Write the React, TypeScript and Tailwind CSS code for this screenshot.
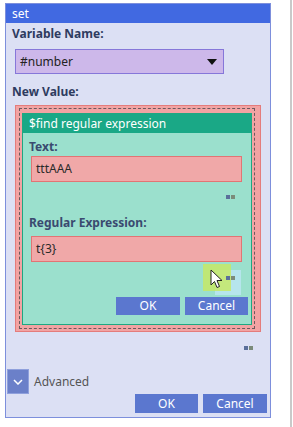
import React from "react";

const font = { fontFamily: '"Noto Sans", "Open Sans", Arial, sans-serif' };

const Quotes: React.FC<{ className?: string }> = ({ className }) => (
  <div className={"flex gap-[1px] " + (className ?? "")}>
    <span className="block w-[4px] h-[4px] bg-[#5a6f9a]" />
    <span className="block w-[4px] h-[4px] bg-[#7b8b7a]" />
  </div>
);

const Cursor: React.FC = () => (
  <svg width="14" height="20" viewBox="0 0 14 20">
    <path
      d="M1 1 L1 16 L4.5 12.5 L7 18.5 L9.5 17.5 L7 11.5 L12 11.5 Z"
      fill="#ffffff"
      stroke="#222"
      strokeWidth="1"
      strokeLinejoin="round"
    />
  </svg>
);

export default function App() {
  return (
    <div style={font} className="w-[292px] h-[427px] bg-white border-r-2 border-[#c9c9c9] pt-[3px] pl-[5px]">
      <div className="w-[266px] h-[415px] border border-[#7d8fdc] bg-[#dce0f4] flex flex-col">
        {/* title */}
        <div className="h-[19px] bg-[#4169e1] text-white text-[12px] leading-[19px] pl-[6px]">set</div>

        <div className="pl-[6px] pt-[3px] text-[12px] leading-[16px] font-bold text-[#2e3b60]">Variable Name:</div>
        <div className="ml-[9px] mt-[7px] w-[209px] h-[25px] border border-[#8677d9] bg-[#cdb8ea] flex items-center justify-between px-[4px]">
          <span className="text-[12px] text-[#222]">#number</span>
          <svg width="10" height="6" viewBox="0 0 10 6" className="mr-[2px]">
            <path d="M0 0 H10 L5 6 Z" fill="#111" />
          </svg>
        </div>

        <div className="pl-[6px] mt-[10px] text-[12px] leading-[16px] font-bold text-[#2e3b60]">New Value:</div>

        {/* red value box */}
        <div className="ml-[9px] mt-[5px] w-[246px] h-[227px] border border-[#e47c7c] bg-[#f2a3a3] pt-[2px] pb-[2px] pl-[3px] pr-[5px]">
          <div className="h-full border border-dashed border-[#6b5a5e] pt-[4px] pl-[2px] pr-[2px] pb-[3px]">
            <div className="h-full border border-[#1ea882] bg-[#9be0cd] flex flex-col">
              <div className="h-[19px] bg-[#1aa886] text-white text-[12px] leading-[19px] pl-[6px]">
                $find regular expression
              </div>
              <div className="relative flex-1 flex flex-col pl-[6px] pr-[9px]">
                <div className="mt-[6px] text-[12px] leading-[16px] font-bold text-[#3a4a70]">Text:</div>
                <div className="mt-[1px] ml-[2px] h-[26px] border border-[#e27474] bg-[#f0a8a8] flex items-center pl-[4px] text-[12px] text-[#2a2a2a]">
                  tttAAA
                </div>
                <div className="flex justify-end mt-[13px] pr-[7px]">
                  <Quotes />
                </div>
                <div className="mt-[16px] text-[12px] leading-[16px] font-bold text-[#3a4a70]">Regular Expression:</div>
                <div className="mt-[5px] ml-[2px] h-[26px] border border-[#e27474] bg-[#f0a8a8] flex items-center pl-[4px] text-[12px] text-[#2a2a2a]">
                  t{"{3}"}
                </div>

                {/* hover overlay */}
                <div className="absolute left-[192px] top-[137px] w-[26px] h-[25px] bg-[#b9e6f0]/90" />
                <div className="absolute left-[180px] top-[131px] w-[28px] h-[27px] bg-[#c8e860]/80" />

                <div className="relative z-10 flex justify-end mt-[14px] pr-[7px]">
                  <Quotes />
                </div>
                <div className="flex justify-end gap-[5px] mt-[17px] -mr-[6px]">
                  <button className="w-[64px] h-[18px] bg-[#5b77cf] text-white text-[12px] leading-[18px]">OK</button>
                  <button className="w-[63px] h-[18px] bg-[#5b77cf] text-white text-[12px] leading-[18px]">Cancel</button>
                </div>

                <div className="absolute z-20 left-[187px] top-[136px]">
                  <Cursor />
                </div>
              </div>
            </div>
          </div>
        </div>

        <div className="flex justify-end mt-[14px] pr-[17px]">
          <Quotes />
        </div>

        <div className="flex items-center mt-[19px] ml-[1px]">
          <div className="w-[22px] h-[25px] bg-[#6b80c9] border border-[#8fa0dc] flex items-center justify-center">
            <svg width="10" height="6" viewBox="0 0 10 6">
              <path d="M1 1 L5 5 L9 1" stroke="#fff" strokeWidth="1.5" fill="none" />
            </svg>
          </div>
          <span className="ml-[5px] text-[12px] text-[#555]">Advanced</span>
        </div>

        <div className="flex justify-end gap-[5px] pr-[3px]">
          <button className="w-[63px] h-[19px] bg-[#5b77cf] text-white text-[12px] leading-[19px]">OK</button>
          <button className="w-[64px] h-[19px] bg-[#5b77cf] text-white text-[12px] leading-[19px]">Cancel</button>
        </div>
      </div>
    </div>
  );
}
